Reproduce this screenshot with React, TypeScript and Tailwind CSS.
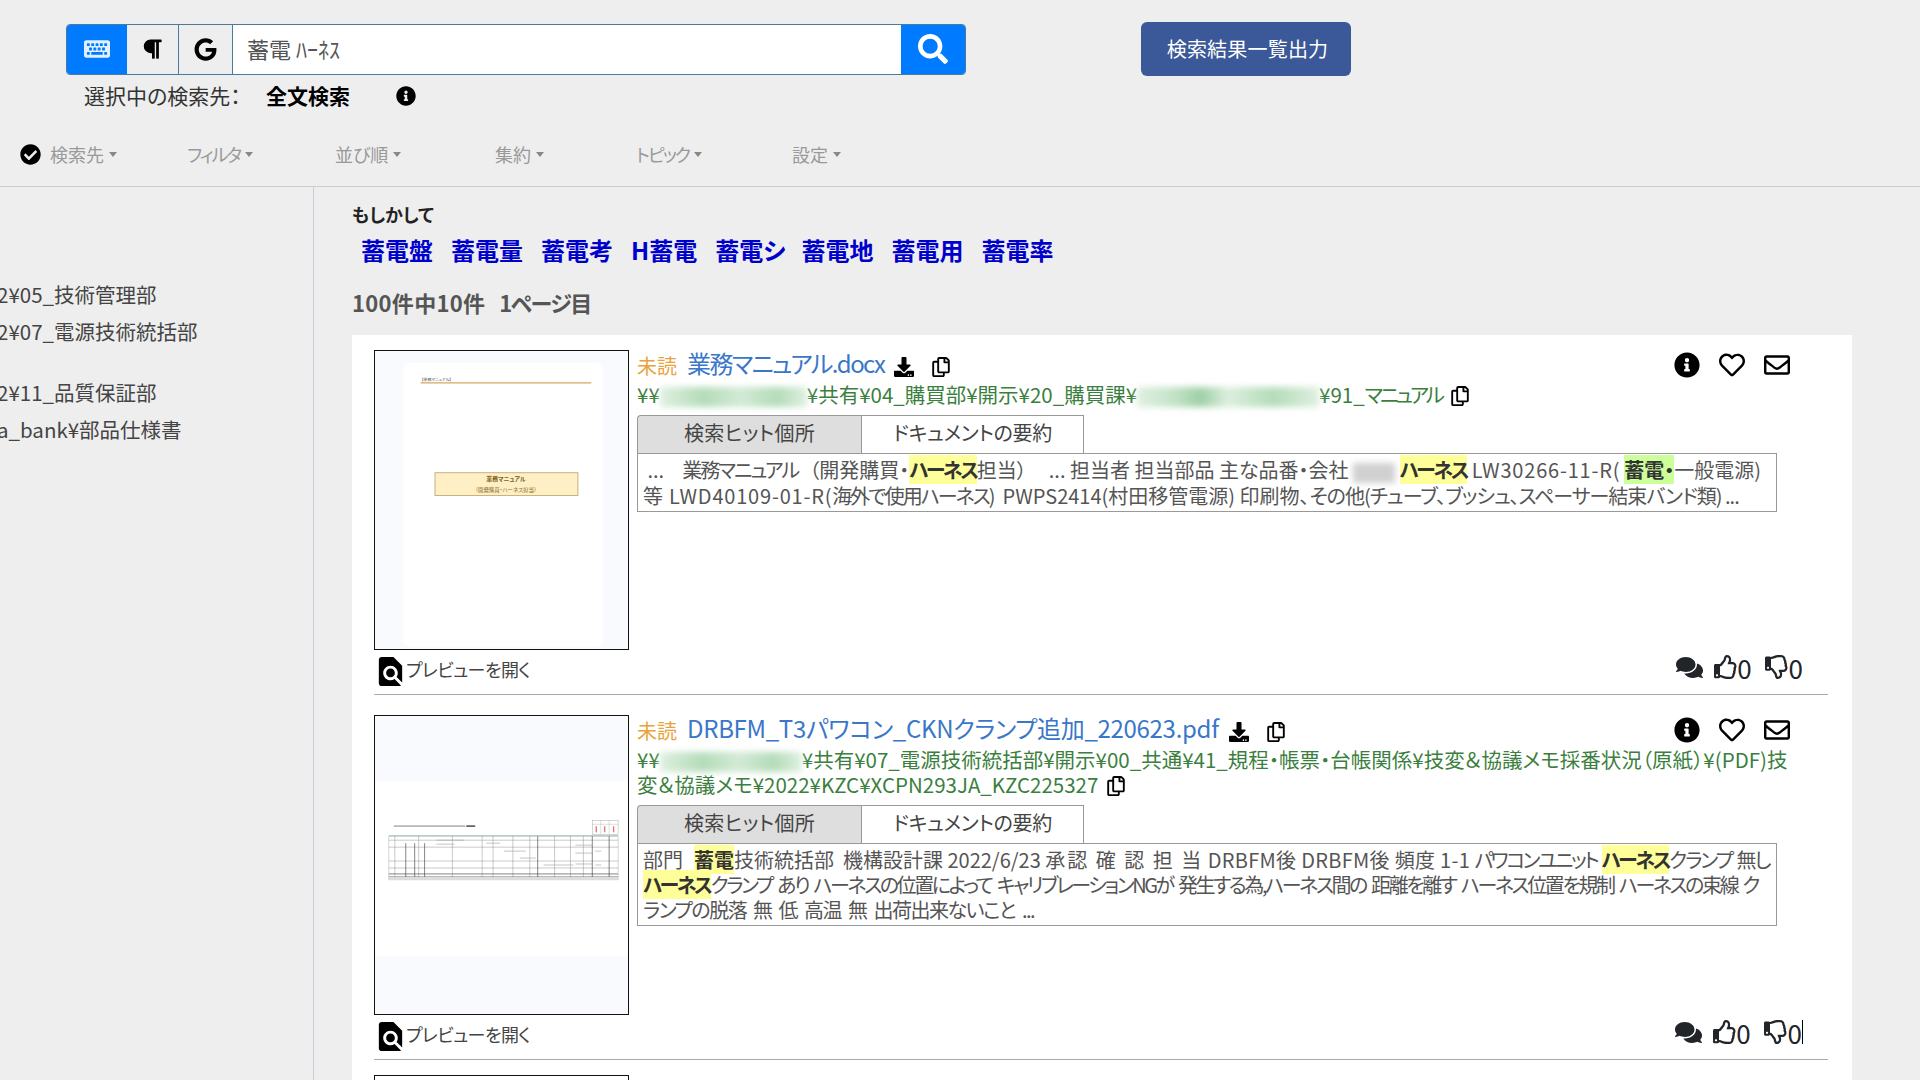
import React from 'react';
import {
  FaCheckCircle,
  FaComments,
  FaDownload,
  FaGoogle,
  FaInfoCircle,
  FaKeyboard,
  FaParagraph,
  FaRegCopy,
  FaRegEnvelope,
  FaRegHeart,
  FaRegThumbsDown,
  FaRegThumbsUp,
  FaSearch,
} from 'react-icons/fa';
import { MdFindInPage } from 'react-icons/md';

const NavItem = ({ label, className }: { label: React.ReactNode; className: string }) => (
  <div className={`flex items-center ${className}`}>
    <span>{label}</span>
    <span className="ml-[5px] mt-[1px] border-x-[4px] border-t-[5px] border-x-transparent border-t-[#888]" />
  </div>
);

const Hit = ({ children, green, narrow }: { children: React.ReactNode; green?: boolean; narrow?: boolean }) => (
  <span
    className={`font-bold text-[#333] ${green ? 'bg-[#ccff99]' : 'bg-[#ffff99]'} ${narrow ? 'tracking-[-2.4px]' : ''}`}
  >
    {children}
  </span>
);

// kana runs are narrower and latin runs wider in the original UI font
const Kana = ({ children }: { children: React.ReactNode }) => <span className="tracking-[-2px]">{children}</span>;
const Latin = ({ children }: { children: React.ReactNode }) => <span className="tracking-[0.8px]">{children}</span>;

const Blur = ({ className }: { className: string }) => (
  <span className={`inline-block h-[20px] align-middle blur-[3px] ${className}`} />
);

const DocThumb = () => (
  <svg viewBox="0 0 255 300" className="block h-full w-full">
    <rect width="255" height="300" fill="#f8fafd" />
    <rect x="28" y="12" width="202" height="286" rx="8" fill="#ffffff" />
    <text x="47" y="30" fontSize="4" fill="#555">
      【業務マニュアル】
    </text>
    <line x1="46" y1="32" x2="218" y2="32" stroke="#d4a95c" strokeWidth="1.4" />
    <rect x="60.5" y="122.5" width="144" height="23" fill="#ffefc4" stroke="#c9b07a" />
    <text x="132" y="131" fontSize="6" textAnchor="middle" fill="#7a5c20" fontWeight="bold">
      業務マニュアル
    </text>
    <text x="132" y="142" fontSize="5.5" textAnchor="middle" fill="#8a6d2f">
      （開発購買・ハーネス担当）
    </text>
  </svg>
);

const TableThumb = () => (
  <svg viewBox="0 0 255 300" className="block h-full w-full">
    <rect width="255" height="300" fill="#f8fafd" />
    <rect x="0" y="65" width="255" height="177" rx="4" fill="#ffffff" />
    <rect x="19" y="110" width="72" height="1.6" fill="#aab5aa" />
    <rect x="92" y="110" width="9" height="1.6" fill="#555" />
    <rect x="219" y="105" width="26" height="14" fill="none" stroke="#aaa" strokeWidth="0.5" />
    <path d="M227.5 105v14M236 105v14M219 109h26" stroke="#aaa" strokeWidth="0.4" />
    <path d="M223 111v6M231.5 111v6M240.5 111v6" stroke="#e07a7a" strokeWidth="1.4" />
    <line x1="14" y1="120.5" x2="245" y2="120.5" stroke="#7fb8a8" strokeWidth="0.8" />
    <rect x="14" y="121" width="231" height="44" fill="#ffffff" stroke="#999" strokeWidth="0.4" />
    <path d="M14 125h231M14 132h231M14 146h231M14 153h231" stroke="#777" strokeWidth="0.4" />
    <path d="M20 121v44M44 121v44M78 121v44M108 121v44M119 121v44M139 121v44M156 121v44M181 121v44M197 121v44M210 121v44" stroke="#777" strokeWidth="0.4" />
    <path d="M31 128v37M40 128v37M50 128v37M164 121v44M219 121v44M236 121v44M14 159h231M14 162h231" stroke="#333" strokeWidth="0.6" />
    <path d="M62 125h28M62 129h18M112 128h14M130 136h22M146 143h16M170 150h30M202 130h18M202 138h18M202 149h18M222 136h6M222 150h6" stroke="#aaa" strokeWidth="0.7" />
    <rect x="14" y="162" width="231" height="3" fill="#dddddd" />
  </svg>
);

const ResultItem = ({
  thumb,
  title,
  titleClass,
  path,
  body,
  cursor,
  className,
}: {
  thumb: React.ReactNode;
  title: string;
  titleClass: string;
  path: React.ReactNode;
  body: React.ReactNode;
  cursor?: boolean;
  className?: string;
}) => (
  <div className={className}>
    <div className="flex">
      <div className="w-[255px] shrink-0">
        <div className="h-[300px] w-[255px] overflow-hidden border-[1.5px] border-[#111]">{thumb}</div>
        <div className="mt-[4px] flex h-[35px] items-center text-[18px] tracking-[-0.6px] text-[#444]">
          <MdFindInPage size={35} className="-ml-[1px] text-black" />
          <span className="-ml-[2px] -mt-[5px]">プレビューを開く</span>
        </div>
      </div>
      <div className="ml-[8px] flex min-w-0 flex-1 flex-col pr-[24px]">
        <div className="flex h-[32px] items-center pb-[2px] pr-[14px]">
          <span className="mt-[1px] text-[20px] text-[#e8a33d]">未読</span>
          <span className={`ml-[10px] -mt-[5px] whitespace-nowrap text-[24px] text-[#3a77c8] ${titleClass}`}>{title}</span>
          <FaDownload size={20} className="ml-[10px] mt-[3px] text-black" />
          <FaRegCopy size={20} className="ml-[17px] mt-[3px] text-black" />
          <div className="ml-auto -mt-[1px] flex items-center gap-[19px] text-black">
            <FaInfoCircle size={26} />
            <FaRegHeart size={26} />
            <FaRegEnvelope size={26} />
          </div>
        </div>
        <div className="whitespace-nowrap text-[20.5px] leading-[25px] text-[#3b7f3e]">{path}</div>
        <div className="mt-[8px] flex h-[38px] w-[447px] text-[20px] text-[#444]">
          <div className="flex w-[224px] items-center justify-center rounded-tl-[4px] border border-b-0 border-r-0 border-[#999] bg-[#dedede] pb-[3px] tracking-[0.3px]">
            検索ヒット個所
          </div>
          <div className="flex flex-1 items-center justify-center border border-b-0 border-[#999] bg-white pb-[3px] tracking-[-0.3px]">
            ドキュメントの要約
          </div>
        </div>
        <div className="w-[1140px] whitespace-nowrap border border-[#999] px-[5px] pb-[3px] pt-[3px] text-[20px] leading-[25px] text-[#555]">
          {body}
        </div>
        <div className="mb-[4px] mr-[1px] mt-auto flex h-[36px] items-center justify-end text-[26px] text-[#212529]">
          <FaComments size={27} />
          <FaRegThumbsUp size={24} className="ml-[11px]" />
          <span className="-ml-[1px]">0</span>
          <FaRegThumbsDown size={24} className="ml-[13px]" />
          <span>0</span>
          {cursor ? <span className="h-[24px] w-px bg-black" /> : null}
        </div>
      </div>
    </div>
    <div className="mt-[5px] h-px bg-[#aaa]" />
  </div>
);

const App = () => {
  return (
    <div className="h-screen overflow-hidden bg-[#eeeeee] font-['Noto_Sans_CJK_JP','Noto_Sans',sans-serif] [font-feature-settings:'palt']">
      <header className="h-[187px] border-b border-[#ccc]">
        <div className="flex items-center pl-[66px] pt-[22px]">
          <div className="flex h-[51px] w-[900px] overflow-hidden rounded-[4px] border border-[#4a7a9c]">
            <div className="flex w-[60px] items-center justify-center bg-[#007bff]">
              <FaKeyboard size={26} className="text-[#dff0ff]" />
            </div>
            <div className="flex w-[52px] items-center justify-center border-r border-[#4a7a9c] bg-[#eeeeee]">
              <FaParagraph size={22} className="-ml-[2px] text-black" />
            </div>
            <div className="flex w-[54px] items-center justify-center border-r border-[#4a7a9c] bg-[#eeeeee]">
              <FaGoogle size={23} className="text-black" />
            </div>
            <div className="flex-1 bg-white pl-[14px] text-[22px] leading-[47px] text-[#555]">蓄電 ﾊｰﾈｽ</div>
            <div className="flex w-[64px] items-center justify-center bg-[#007bff]">
              <FaSearch size={30} className="text-white" />
            </div>
          </div>
          <div className="ml-[175px] flex h-[54px] w-[210px] items-center justify-center rounded-[6px] bg-[#3b5998] pl-[3px] text-[20px] tracking-[0.2px] text-white">
            検索結果一覧出力
          </div>
        </div>
        <div className="mt-[5px] flex h-[30px] items-center pl-[84px] text-[21px] text-[#333]">
          <span className="w-[182px]">選択中の検索先：</span>
          <span className="font-bold text-black">全文検索</span>
          <FaInfoCircle size={20} className="ml-[46px] text-black" />
        </div>
        <div className="mt-[28px] flex h-[30px] items-center pl-[20px] text-[18px] text-[#999]">
          <div className="flex w-[167px] items-center">
            <FaCheckCircle size={21} className="mr-[9px] text-black" />
            <NavItem label="検索先" className="" />
          </div>
          <NavItem label={<span className="tracking-[-2px]">フィルタ</span>} className="w-[148px]" />
          <NavItem label="並び順" className="w-[160px]" />
          <NavItem label="集約" className="w-[139px]" />
          <NavItem label={<span className="tracking-[-2px]">トピック</span>} className="w-[158px] pl-[2px]" />
          <NavItem label="設定" className="" />
        </div>
      </header>

      <div className="flex">
        <aside className="h-[893px] w-[314px] shrink-0 overflow-hidden border-r border-[#ccd] pt-[89px] text-[20.5px] leading-[37px] text-[#444]">
          <div className="-ml-[3px] whitespace-nowrap">2¥05_技術管理部</div>
          <div className="-ml-[3px] whitespace-nowrap">2¥07_電源技術統括部</div>
          <div className="-ml-[3px] mt-[24px] whitespace-nowrap">2¥11_品質保証部</div>
          <div className="-ml-[3px] whitespace-nowrap">a_bank¥部品仕様書</div>
        </aside>

        <main className="min-w-0 flex-1 pl-[38px] pr-[68px] pt-[14px]">
          <div className="text-[18px] font-bold leading-[26px] text-[#222]">もしかして</div>
          <div className="ml-[9px] mt-[5px] flex gap-[18px] text-[24px] font-bold leading-[36px] text-[#0000cd]">
            <span>蓄電盤</span>
            <span>蓄電量</span>
            <span>蓄電考</span>
            <span>H蓄電</span>
            <span className="-mr-[2px]">蓄電シ</span>
            <span>蓄電地</span>
            <span>蓄電用</span>
            <span>蓄電率</span>
          </div>
          <div className="mt-[19px] flex gap-[14px] text-[22px] font-bold leading-[30px] text-[#555]">
            <span className="tracking-[0.3px]">100件中10件</span>
            <span className="tracking-[-1.5px]">1ページ目</span>
          </div>

          <div className="mt-[18px] bg-white pl-[22px] pr-[24px] pt-[15px]">
            <ResultItem
              thumb={<DocThumb />}
              title="業務マニュアル.docx"
              titleClass="tracking-[-1.6px]"
              path={
                <>
                  ¥¥
                  <Blur className="w-[147px] bg-[linear-gradient(90deg,#dff0e1,#b4dcb9_30%,#d3ead6_55%,#b4dcb9_80%,#dff0e1)]" />
                  ¥共有¥04_購買部¥開示¥20_購買課¥
                  <Blur className="w-[182px] bg-[linear-gradient(90deg,#dff0e1,#c4e3c8_20%,#9fcfa6_35%,#dcefde_50%,#b4dcb9_75%,#dff0e1)]" />
                  ¥91_<span className="tracking-[-3px]">マニュアル</span>
                  <FaRegCopy size={20} className="ml-[8px] inline align-[-3px] text-black" />
                </>
              }
              body={
                <>
                  <div>
                    &nbsp;...
                    <span className="ml-[18px]">
                      <Kana>業務マニュアル</Kana>
                    </span>
                    <span className="ml-[11px]">（開発購買・</span>
                    <Hit narrow>ハーネス</Hit>担当）
                    <span className="ml-[22px]">... 担当者 担当部品 主な品番・会社 </span>
                    <Blur className="w-[42px] bg-[#d0d0d0]" /> <Hit narrow>ハーネス</Hit> <Latin>LW30266-11-R(</Latin>
                    <span className="ml-[4px]">
                      <Hit green>蓄電・</Hit>
                    </span>
                    一般電源)
                  </div>
                  <div>
                    <Latin>等 LWD40109-01-R(</Latin>
                    <Kana>海外で使用ハーネス</Kana>)<span className="ml-[7px]">PWPS2414(村田移管電源) 印刷物、</span>
                    <span className="tracking-[-1px]">その他(チューブ、ブッシュ、スペーサー結束バンド類) ...</span>
                  </div>
                </>
              }
            />
            <ResultItem
              thumb={<TableThumb />}
              title="DRBFM_T3パワコン_CKNクランプ追加_220623.pdf"
              titleClass="tracking-[-0.3px]"
              path={
                <>
                  <div>
                    ¥¥
                    <Blur className="w-[142px] bg-[linear-gradient(90deg,#dff0e1,#b4dcb9_30%,#d3ead6_55%,#b4dcb9_80%,#dff0e1)]" />
                    ¥共有¥07_電源技術統括部¥開示¥00_共通¥41_規程・帳票・台帳関係¥技変＆協議メモ採番状況（原紙）¥(PDF)技
                  </div>
                  <div>
                    変＆協議メモ¥2022¥KZC¥XCPN293JA_KZC225327
                    <FaRegCopy size={20} className="ml-[8px] inline align-[-3px] text-black" />
                  </div>
                </>
              }
              body={
                <>
                  <div>
                    部門
                    <span className="ml-[11px]">
                      <Hit>蓄電</Hit>
                    </span>
                    技術統括部&nbsp;&nbsp;機構設計課 2022/6/23 <span className="tracking-[2px]">承認 確 認 担 当</span>{' '}
                    <span className="tracking-[0.3px]">DRBFM後 DRBFM後 頻度 1-1</span>{' '}
                    <span className="tracking-[-2.5px]">パワコンユニット</span> <Hit narrow>ハーネス</Hit>
                    <Kana>クランプ</Kana> <span className="tracking-[-2px]">無し</span>
                  </div>
                  <div className="tracking-[-2.4px] [word-spacing:3px]">
                    <Hit>ハーネス</Hit>クランプ あり ハーネスの位置によって キャリブレーションNGが 発生する為,ハーネス間の 距離を離す ハーネス位置を規制 ハーネスの束線 ク
                  </div>
                  <div className="tracking-[-1.5px] [word-spacing:4px]">ランプの脱落 無 低 高温 無 出荷出来ないこと ...</div>
                </>
              }
              cursor
              className="mt-[20px]"
            />
            <div className="mt-[15px] h-[300px] w-[255px] border-[1.5px] border-[#111]" />
          </div>
        </main>
      </div>
    </div>
  );
};

export default App;
